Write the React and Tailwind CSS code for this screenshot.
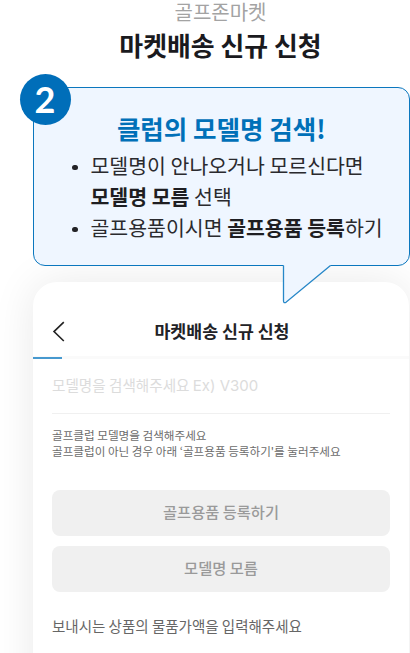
import React from 'react';

const buttons = ['골프용품 등록하기', '모델명 모름'];

const StepBubble = () => {
  return (
    <div className="relative z-10 ml-[33px] mt-[23px] h-[179px] w-[376.5px] rounded-xl border border-[#0b77be] bg-[#eff6ff]">
      {/* Step number */}
      <div className="absolute -left-[14px] -top-[14px] flex h-[51px] w-[51px] items-center justify-center rounded-full bg-[#006eb9] pr-px pb-[2px] font-['Lato'] text-[36px] leading-none font-bold text-white">
        2
      </div>

      <h2 className="pt-[21px] text-center text-[25.5px] leading-[38px] font-bold text-[#0070b8]">
        클럽의 모델명 검색!
      </h2>
      <ul className="pl-[56.5px] pt-[3px] text-[20.5px] leading-[31px] whitespace-nowrap text-[#2a2a2e]">
        <li className="relative">
          <span className="absolute -left-[18.5px] top-[14.5px] h-[5.5px] w-[5.5px] rounded-full bg-[#222226]" />
          모델명이 안나오거나 모르신다면
          <br />
          <strong className="font-bold text-[#1e1e22]">모델명 모름</strong> 선택
        </li>
        <li className="relative">
          <span className="absolute -left-[18.5px] top-[14.5px] h-[5.5px] w-[5.5px] rounded-full bg-[#222226]" />
          골프용품이시면 <strong className="font-bold text-[#1e1e22]">골프용품 등록</strong>하기
        </li>
      </ul>

      {/* Bubble tail */}
      <svg className="absolute left-[248px] top-[175px]" width="50" height="43" viewBox="0 0 50 43" fill="none">
        <path d="M1.5 0V2.5V38Q1.6 40.5 4 39.3L48.5 2.5V0Z" fill="#eff6ff" />
        <path d="M1.5 2.5V38Q1.6 40.5 4 39.3L48.5 2.5" stroke="#2687c8" strokeWidth="1.3" />
      </svg>
    </div>
  );
};

const PhoneScreen = () => {
  return (
    <div className="ml-[33px] mt-4 h-[420px] w-[376px] rounded-t-[24px] bg-white shadow-[0_0_44px_rgba(0,0,0,0.09)]">
      <div className="relative flex h-[74px] items-center justify-center pl-[2px] pt-[24px]">
        <svg className="absolute left-[19px] top-[39px]" width="13" height="21" viewBox="0 0 13 21" fill="none">
          <path d="M11.8 1.2L2 10.6L11.8 20" stroke="#222" strokeWidth="1.6" />
        </svg>
        <h3 className="text-[17.3px] leading-6 font-bold text-[#222226]">마켓배송 신규 신청</h3>
      </div>
      <div className="h-[3px] bg-[#fafafa]">
        <div className="relative top-[0.5px] h-[2px] w-[29px] bg-[#4799cf]" />
      </div>

      <div className="px-[19px]">
        <div className="h-[55px] w-[338px] border-b border-[#f0f0f0] pt-[15px] text-[14.6px] leading-[22px] whitespace-nowrap text-[#dcdcdc]">
          모델명을 검색해주세요 <span className="font-['Inter'] text-[15px]">Ex) V300</span>
        </div>
        <p className="mt-[14px] text-[11.6px] leading-[15.5px] whitespace-nowrap text-[#6c6c6c]">
          골프클럽 모델명을 검색해주세요
          <br />
          골프클럽이 아닌 경우 아래 ‘골프용품 등록하기'를 눌러주세요
        </p>
        <div className="mt-[31px] flex w-[338px] flex-col gap-[10px]">
          {buttons.map((label) => (
            <button
              key={label}
              className="h-[46px] rounded-lg bg-[#f0f0f0] pb-[3px] text-[15.3px] font-medium text-[#9a9a9a]"
            >
              {label}
            </button>
          ))}
        </div>
        <p className="mt-[23px] text-[14.5px] leading-[22px] whitespace-nowrap text-[#666]">
          보내시는 상품의 물품가액을 입력해주세요
        </p>
      </div>
    </div>
  );
};

const App = () => {
  return (
    <div className="h-[653px] w-[410px] overflow-hidden bg-white font-['Noto_Sans_CJK_KR',sans-serif]">
      <div className="text-center">
        <p className="pl-[31px] text-[20px] leading-[23px] text-[#a3a3a3]">골프존마켓</p>
        <h1 className="mt-[2px] pl-[31px] text-[25.9px] leading-[39px] font-bold text-[#1a1a1e]">
          마켓배송 신규 신청
        </h1>
      </div>
      <StepBubble />
      <PhoneScreen />
    </div>
  );
};

export default App;
